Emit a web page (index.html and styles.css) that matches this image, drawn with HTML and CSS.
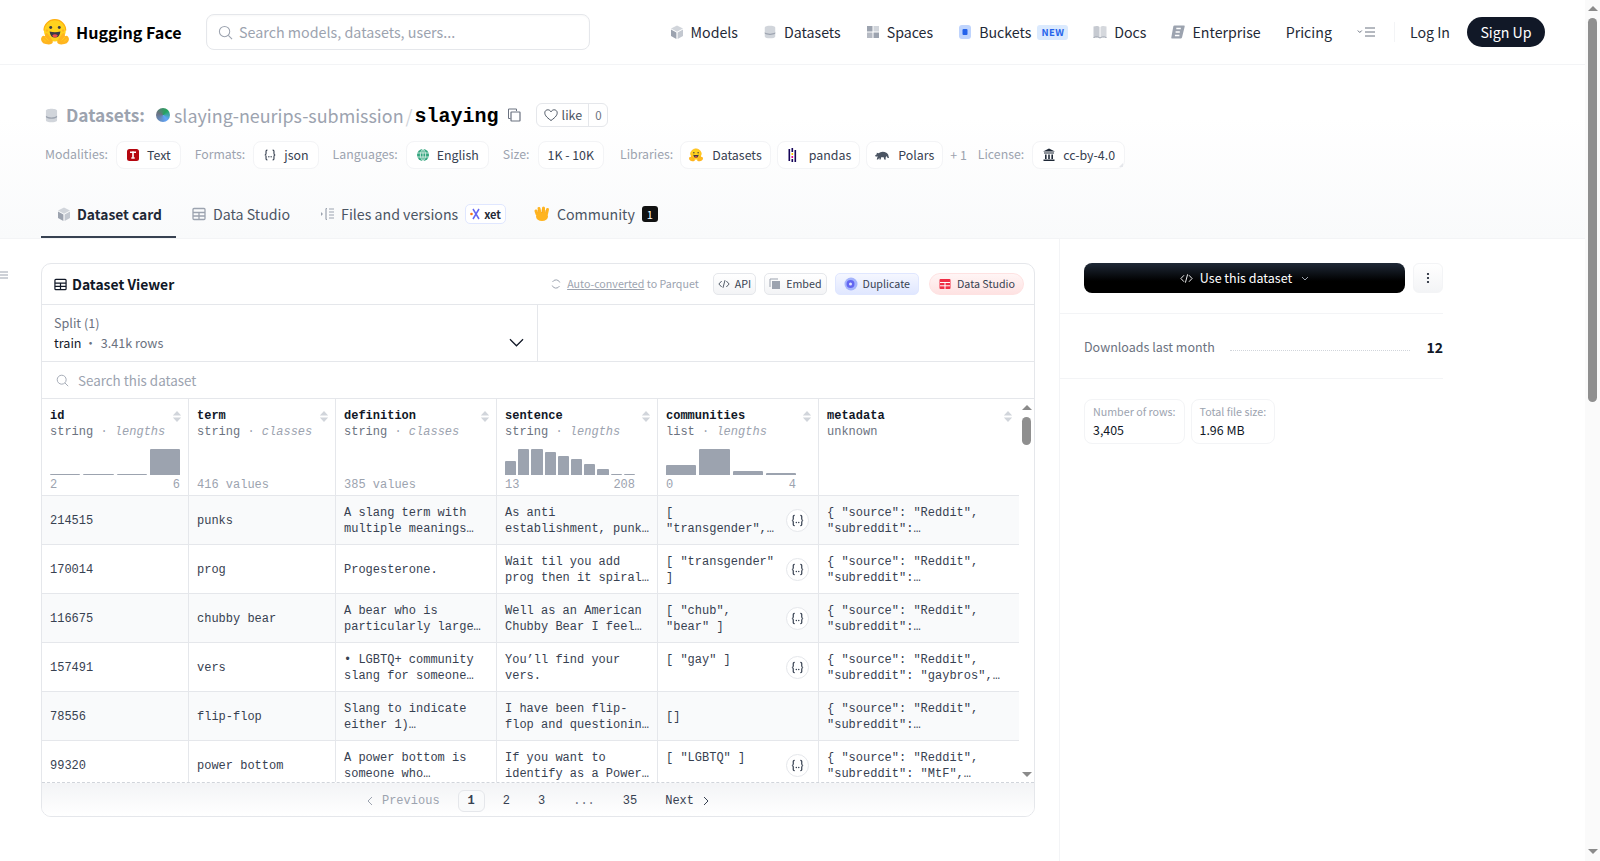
FILE: index.html
```html
<!DOCTYPE html>
<html lang="en">
<head>
<meta charset="utf-8">
<title>slaying-neurips-submission/slaying</title>
<link rel="stylesheet" href="styles.css">
</head>
<body>
<svg class="defs" width="0" height="0" aria-hidden="true">
  <symbol id="cube" viewBox="0 0 14 14"><path d="M7 .5 13 3.600 7 6.800 1 3.600z" fill="#d1d5db"/><path d="M1 4.600 6.400 7.600V14L1 11z" fill="#9ca3af"/><path d="M13 4.600 7.600 7.600V14L13 11z" fill="#c3c8d0"/></symbol>
  <symbol id="db" viewBox="0 0 14 16"><path d="M1 3c0-3 12-3 12 0v10c0 3-12 3-12 0z" fill="#d1d5db"/><path d="M1 8.400c3 2.200 9 2.200 12 0v1.400c-3 2.200-9 2.200-12 0z" fill="#9ca3af"/></symbol>
  <symbol id="hug" viewBox="0 0 95 88"><circle cx="47" cy="39" r="37" fill="#ffd21e"/><path d="M10 39a37 37 0 0 1 74 0" fill="none" stroke="#ffae0f" stroke-width="4"/><circle cx="33" cy="29" r="5" fill="#3a3b45"/><circle cx="62" cy="29" r="5" fill="#3a3b45"/><circle cx="20" cy="39" r="4" fill="#ffb41f"/><circle cx="75" cy="39" r="4" fill="#ffb41f"/><path d="M29 42q18 5 37 0q-3 21-18.500 21T29 42z" fill="#3a3b45"/><path d="M38 55q9-6 19 0q-3 8-9.500 8T38 55z" fill="#ef4e4e"/><path d="M3 60q-5 7-1 15t14 10q13 3 20-1t2-13L23 50q-4-5-8-1l-1 9q-7-4-11 2z" fill="#ffb41f"/><path d="M92 60q5 7 1 15t-14 10q-13 3-20-1t-2-13l15-21q4-5 8-1l1 9q7-4 11 2z" fill="#ffb41f"/><path d="M8 68l10 9M14 61l11 12" stroke="#ffd21e" stroke-width="3" fill="none"/><path d="M87 68l-10 9M81 61 70 73" stroke="#ffd21e" stroke-width="3" fill="none"/></symbol>
  <symbol id="braces" viewBox="0 0 16 16"><path d="M5 2.500C3 2.500 3.500 4 3.500 6S2.500 8 2 8c.5 0 1.500 0 1.500 2s-.5 3.500 1.500 3.500M11 2.500c2 0 1.500 1.500 1.500 3.500s1 2 1.500 2c-.5 0-1.500 0-1.500 2s.5 3.500-1.500 3.500" fill="none" stroke="#374151" stroke-width="1.300"/><circle cx="6.700" cy="10" r=".8" fill="#374151"/><circle cx="9.300" cy="10" r=".8" fill="#374151"/></symbol>
  <symbol id="grid" viewBox="0 0 14 14"><rect x="1" y="1.500" width="12" height="11" rx="1" fill="none" stroke="currentColor" stroke-width="1.300"/><path d="M1 5.500h12M7 5.500v7M1 9h12" stroke="currentColor" stroke-width="1.300"/></symbol>
  <symbol id="code" viewBox="0 0 14 14"><path d="M4.300 3.500 1 7l3.300 3.500M9.700 3.500 13 7l-3.300 3.500M8.200 2.500 5.800 11.500" fill="none" stroke="currentColor" stroke-width="1"/></symbol>
  <symbol id="sort" viewBox="0 0 10 14"><path d="M5 1 9.500 6H.5zM5 13 .5 8h9z" fill="#d1d5db"/></symbol>
  <symbol id="mag" viewBox="0 0 16 16"><circle cx="7" cy="7" r="5.500" fill="none" stroke="currentColor" stroke-width="1.100"/><path d="m11 11 4 4" stroke="currentColor" stroke-width="1.100"/></symbol>
</svg>

<div class="page-scrollbar"><span class="arrow-up"></span><span class="page-thumb"></span><span class="arrow-down"></span></div>

<header class="topbar">
  <a class="brand"><svg class="brand-logo"><use href="#hug"/></svg><span>Hugging Face</span></a>
  <div class="site-search"><svg class="site-search-icon"><use href="#mag"/></svg><span>Search models, datasets, users...</span></div>
  <nav class="nav">
    <a class="nav-item"><svg class="nav-ic"><use href="#cube"/></svg>Models</a>
    <a class="nav-item"><svg class="nav-ic"><use href="#db"/></svg>Datasets</a>
    <a class="nav-item"><svg class="nav-ic" viewBox="0 0 14 14"><rect x="1" y="1" width="5.500" height="5.500" fill="#9ca3af"/><rect x="7.500" y="1" width="5.500" height="5.500" fill="#d1d5db"/><rect x="1" y="7.500" width="5.500" height="5.500" fill="#b5bac3"/><rect x="7.500" y="7.500" width="5.500" height="5.500" fill="#9ca3af"/></svg>Spaces</a>
    <a class="nav-item"><svg class="nav-ic" viewBox="0 0 14 14"><rect x="1" y="0" width="12" height="14" rx="3" fill="#bfd4fd"/><rect x="4.500" y="4" width="5" height="6" rx="1" fill="#2563eb"/></svg>Buckets<span class="new-badge">NEW</span></a>
    <a class="nav-item"><svg class="nav-ic" viewBox="0 0 14 14"><path d="M.5 1.500c3-1 5-.5 6 .5v11c-1-1-3-1.500-6-.5z" fill="#c6cad1"/><path d="M13.500 1.500c-3-1-5-.5-6 .5v11c1-1 3-1.500 6-.5z" fill="#d5d8dd"/><path d="M.5 12.500c3-1 5-.5 6.500.5 1.500-1 3.500-1.500 6.500-.5" fill="none" stroke="#9ca3af"/></svg>Docs</a>
    <a class="nav-item"><svg class="nav-ic" viewBox="0 0 14 14"><path d="M3.500 0.500h9.500q1 0 .7 1L11 12.500q-.3 1-1.300 1H1q-1 0-.7-1L2.300 1.500q.2-1 1.200-1z" fill="#9ca3af"/><path d="M5.300 3.500h4.500M4.600 7h4.200M3.900 10.500h4.500" stroke="#fff" stroke-width="1.300"/></svg>Enterprise</a>
    <a class="nav-item">Pricing</a>
    <a class="nav-menu"><svg class="nav-menu-ic" viewBox="0 0 18 10"><path d="m.8 3.500 2 2 2-2" fill="none" stroke="#6b7280" stroke-width="1"/><path d="M8 1h10M8 5h10M8 9h10" stroke="#6b7280" stroke-width="1"/></svg></a>
    <span class="nav-sep"></span>
    <a class="nav-item nav-login">Log In</a>
    <a class="signup">Sign Up</a>
  </nav>
</header>

<section class="repo-head">
  <h1 class="repo-title">
    <svg class="repo-db"><use href="#db"/></svg>
    <span class="repo-kind">Datasets:</span>
    <span class="avatar"></span>
    <span class="repo-org">slaying-neurips-submission</span>
    <span class="repo-slash">/</span>
    <span class="repo-name">slaying</span>
    <svg class="repo-copy" viewBox="0 0 14 14"><path d="M3.500 10.500h-2V1h8v2" fill="none" stroke="#6b7280" stroke-width="1"/><rect x="4" y="4" width="9" height="9" rx=".5" fill="none" stroke="#6b7280" stroke-width="1.200"/></svg>
    <span class="like"><span class="like-main"><svg class="like-heart" viewBox="0 0 14 14"><path d="M7 12.500C2 9 .8 6.800.8 4.800.8 3 2.200 1.800 3.800 1.800c1.300 0 2.500.7 3.200 2 .7-1.300 1.900-2 3.200-2 1.600 0 3 1.200 3 3 0 2-1.200 4.200-6.200 7.700z" fill="none" stroke="#4b5563" stroke-width="1"/></svg>like</span><span class="like-count">0</span></span>
  </h1>
  <div class="tags">
    <span class="tag-label">Modalities:</span>
    <span class="tag"><svg class="tag-ic" viewBox="0 0 14 14"><rect x="1" y="1" width="12" height="12" rx="2.500" fill="#b5060f"/><rect x="4" y="3.500" width="6" height="1.500" fill="#fff"/><rect x="6.200" y="3.500" width="1.600" height="7" fill="#fff"/><rect x="5" y="9.500" width="4" height="1" fill="#fff"/></svg>Text</span>
    <span class="tag-label">Formats:</span>
    <span class="tag"><svg class="tag-ic"><use href="#braces"/></svg>json</span>
    <span class="tag-label">Languages:</span>
    <span class="tag"><svg class="tag-ic" viewBox="0 0 14 14"><circle cx="7" cy="7" r="6" fill="#34a57f"/><path d="M1 5h12M1 9h12M7 1v12M7 1C3.500 4 3.500 10 7 13M7 1c3.500 3 3.500 9 0 12" fill="none" stroke="#e7f6f0" stroke-width=".8"/></svg>English</span>
    <span class="tag-label">Size:</span>
    <span class="tag tag-size">1K - 10K</span>
    <span class="tag-label tag-label-libs">Libraries:</span>
    <span class="tag tag-lib"><svg class="tag-ic"><use href="#hug"/></svg>Datasets</span>
    <span class="tag tag-lib"><svg class="tag-ic" viewBox="0 0 14 14"><rect x="2.500" y="1" width="1.600" height="12" fill="#150458"/><rect x="5.500" y="0" width="1.600" height="4" fill="#150458"/><rect x="5.500" y="5" width="1.600" height="2" fill="#ffca00"/><rect x="5.500" y="8" width="1.600" height="2" fill="#e70488"/><rect x="5.500" y="11" width="1.600" height="3" fill="#150458"/><rect x="8.500" y="2" width="1.600" height="12" fill="#150458"/></svg>pandas</span>
    <span class="tag tag-lib"><svg class="tag-ic" viewBox="0 0 16 12"><path d="M0 6.500 2 5V3.500L4 4q3-2.500 7-1.500 3 .5 4 3l1 4h-1.500L13 7l-1 2.500 .5 1.500H10.500L10 8.500H7L6.500 11H5V9L3.500 11H2L3 7.500 1 8z" fill="#4b5563"/></svg>Polars</span>
    <span class="tag-more">+ 1</span>
    <span class="tag-label">License:</span>
    <span class="tag tag-license"><svg class="tag-ic" viewBox="0 0 14 14"><path d="M7 .5 13 3.500H1zM2 4.500h10v1H2zM3 6.500h1.600v4.500H3zM6.200 6.500h1.600v4.500H6.200zM9.400 6.500H11v4.500H9.400zM1.500 11.500h11v1.500h-11z" fill="#1f2937"/></svg>cc-by-4.0<span class="tag-corner"></span></span>
  </div>
  <div class="tabs">
    <a class="tab tab-active"><svg class="tab-ic"><use href="#cube"/></svg>Dataset card</a>
    <a class="tab"><svg class="tab-ic tab-grid"><use href="#grid"/></svg>Data Studio</a>
    <a class="tab"><svg class="tab-ic" viewBox="0 0 14 14"><path d="M1 5l2 2-2 2z" fill="#9ca3af"/><path d="M6 1.500h1M6 1.500v11M6 12.500h1M9 2h5M9 5h5M9 8h5M9 11h5" stroke="#9ca3af" stroke-width="1.200"/></svg>Files and versions<span class="xet"><svg class="xet-ic" viewBox="0 0 12 12"><path d="M3 1l6 10M9 1 3 11" stroke="#6366f1" stroke-width="1.500"/><circle cx="1.500" cy="6" r="1.300" fill="#f97316"/></svg>xet</span></a>
    <a class="tab tab-comm"><svg class="tab-hand" viewBox="0 0 16 16"><g fill="none" stroke="#ffb41f" stroke-width="3" stroke-linecap="round"><path d="M3 8 2 5M6 7 5 2.500M9.500 7V2M12.500 8l1-4.500"/></g><ellipse cx="8" cy="10.500" rx="6" ry="4.500" fill="#ffb41f"/><path d="M4.500 7 4 4M8 7V3.500M11.500 7l.5-3" fill="none" stroke="#f59e0b" stroke-width=".6"/></svg>Community<span class="count-badge">1</span></a>
  </div>
</section>

<main class="layout">
  <div class="content">
    <svg class="side-toggle" viewBox="0 0 8 8"><path d="M0 1h8M0 4h8M0 7h8" stroke="#9ca3af" stroke-width="1"/></svg>
    <section class="viewer">
      <div class="viewer-head">
        <svg class="viewer-ic"><use href="#grid"/></svg>
        <h2 class="viewer-title">Dataset Viewer</h2>
        <div class="viewer-actions">
          <svg class="refresh" viewBox="0 0 10 10"><path d="M8.800 3.500A4 4 0 0 0 1.500 3M1.200 6.500A4 4 0 0 0 8.500 7" fill="none" stroke="#9ca3af" stroke-width="1"/></svg>
          <span class="converted"><u>Auto-converted</u> to Parquet</span>
          <a class="act"><svg class="act-ic"><use href="#code"/></svg>API</a>
          <a class="act"><svg class="act-ic" viewBox="0 0 12 12"><path d="M1 9V1h8" fill="none" stroke="#9ca3af"/><rect x="3" y="3" width="8" height="8" fill="#9ca3af"/></svg>Embed</a>
          <a class="act act-blue"><svg class="act-ic act-dup" viewBox="0 0 14 14"><circle cx="7" cy="7" r="6.500" fill="#a5b4fc"/><circle cx="6.500" cy="7" r="4" fill="#6366f1"/><circle cx="6.500" cy="7" r="1.500" fill="#e0e7ff"/></svg>Duplicate</a>
          <a class="act act-red"><svg class="act-ic" viewBox="0 0 12 12"><rect x=".5" y="1" width="11" height="10" rx="1" fill="#ef2d45"/><path d="M1 4.500h10M1 7.800h10M6 4.500V11" stroke="#fff" stroke-width="1"/></svg>Data Studio</a>
        </div>
      </div>
      <div class="split-row">
        <div class="split">
          <div class="split-text">
            <div class="split-label">Split (1)</div>
            <div class="split-val">train <span class="split-dot">·</span> <span class="split-rows">3.41k rows</span></div>
          </div>
          <svg class="split-chev" viewBox="0 0 16 9"><path d="m1 1 7 7 7-7" fill="none" stroke="#111827" stroke-width="1.300"/></svg>
        </div>
        <div class="split-empty"></div>
      </div>
      <div class="data-search"><svg class="data-search-ic"><use href="#mag"/></svg><span>Search this dataset</span></div>

      <div class="table-wrap">
        <div class="scroller">
          <table class="grid">
            <colgroup><col class="c-s"><col class="c-s"><col class="c-m"><col class="c-m"><col class="c-m"><col></colgroup>
            <thead>
              <tr>
                <th><div class="th-name">id<svg class="sort"><use href="#sort"/></svg></div><div class="th-type">string <span>· <i>lengths</i></span></div>
                  <div class="chart"><b class="bar" style="height:1px"></b><b class="bar" style="height:1px"></b><b class="bar" style="height:1px"></b><b class="bar" style="height:26px"></b></div>
                  <div class="range"><span>2</span><span>6</span></div></th>
                <th><div class="th-name">term<svg class="sort"><use href="#sort"/></svg></div><div class="th-type">string <span>· <i>classes</i></span></div>
                  <div class="chart"></div><div class="range"><span>416 values</span></div></th>
                <th><div class="th-name">definition<svg class="sort"><use href="#sort"/></svg></div><div class="th-type">string <span>· <i>classes</i></span></div>
                  <div class="chart"></div><div class="range"><span>385 values</span></div></th>
                <th><div class="th-name">sentence<svg class="sort"><use href="#sort"/></svg></div><div class="th-type">string <span>· <i>lengths</i></span></div>
                  <div class="chart chart-tight"><b class="bar" style="height:14px"></b><b class="bar" style="height:26px"></b><b class="bar" style="height:26px"></b><b class="bar" style="height:23px"></b><b class="bar" style="height:19px"></b><b class="bar" style="height:16px"></b><b class="bar" style="height:11px"></b><b class="bar" style="height:6px"></b><b class="bar" style="height:1px"></b><b class="bar" style="height:1px"></b></div>
                  <div class="range"><span>13</span><span>208</span></div></th>
                <th><div class="th-name">communities<svg class="sort"><use href="#sort"/></svg></div><div class="th-type">list <span>· <i>lengths</i></span></div>
                  <div class="chart"><b class="bar" style="height:10px"></b><b class="bar" style="height:26px"></b><b class="bar" style="height:4px"></b><b class="bar" style="height:2px"></b></div>
                  <div class="range"><span>0</span><span>4</span></div></th>
                <th><div class="th-name">metadata<svg class="sort"><use href="#sort"/></svg></div><div class="th-type">unknown</div>
                  <div class="chart"></div><div class="range"></div></th>
              </tr>
            </thead>
            <tbody>
              <tr><td>214515</td><td>punks</td><td>A slang term with multiple meanings…</td><td>As anti establishment, punk…</td>
                <td><div class="list"><span class="list-text">[ "transgender",…</span><span class="json-btn"><svg><use href="#braces"/></svg></span></div></td>
                <td>{ "source": "Reddit", "subreddit":…</td></tr>
              <tr><td>170014</td><td>prog</td><td>Progesterone.</td><td>Wait til you add prog then it spiral…</td>
                <td><div class="list"><span class="list-text">[ "transgender" ]</span><span class="json-btn"><svg><use href="#braces"/></svg></span></div></td>
                <td>{ "source": "Reddit", "subreddit":…</td></tr>
              <tr><td>116675</td><td>chubby bear</td><td>A bear who is particularly large…</td><td>Well as an American Chubby Bear I feel…</td>
                <td><div class="list"><span class="list-text">[ "chub", "bear" ]</span><span class="json-btn"><svg><use href="#braces"/></svg></span></div></td>
                <td>{ "source": "Reddit", "subreddit":…</td></tr>
              <tr><td>157491</td><td>vers</td><td>• LGBTQ+ community slang for someone…</td><td>You’ll find your vers.</td>
                <td><div class="list"><span class="list-text">[ "gay" ]</span><span class="json-btn"><svg><use href="#braces"/></svg></span></div></td>
                <td>{ "source": "Reddit", "subreddit": "gaybros",…</td></tr>
              <tr><td>78556</td><td>flip-flop</td><td>Slang to indicate either 1)…</td><td>I have been flip-flop and questionin…</td>
                <td>[]</td>
                <td>{ "source": "Reddit", "subreddit":…</td></tr>
              <tr><td>99320</td><td>power bottom</td><td>A power bottom is someone who…</td><td>If you want to identify as a Power…</td>
                <td><div class="list"><span class="list-text">[ "LGBTQ" ]</span><span class="json-btn"><svg><use href="#braces"/></svg></span></div></td>
                <td>{ "source": "Reddit", "subreddit": "MtF",…</td></tr>
            </tbody>
          </table>
        </div>
        <div class="table-scrollbar"><span class="arrow-up"></span><span class="table-thumb"></span><span class="arrow-down"></span></div>
      </div>

      <nav class="pager">
        <a class="pg pg-off pg-prev"><svg class="pg-chev" viewBox="0 0 6 10"><path d="M5 1 1 5l4 4" fill="none" stroke="currentColor"/></svg>Previous</a>
        <a class="pg pg-on">1</a>
        <a class="pg">2</a>
        <a class="pg">3</a>
        <a class="pg pg-dots">...</a>
        <a class="pg">35</a>
        <a class="pg pg-next">Next<svg class="pg-chev" viewBox="0 0 6 10"><path d="m1 1 4 4-4 4" fill="none" stroke="currentColor"/></svg></a>
      </nav>
    </section>
  </div>

  <aside class="side">
    <div class="side-actions">
      <a class="use-btn"><svg class="use-ic"><use href="#code"/></svg>Use this dataset<svg class="use-chev" viewBox="0 0 8 5"><path d="m1 1 3 3 3-3" fill="none" stroke="#9ca3af"/></svg></a>
      <a class="more-btn"><svg class="more-ic" viewBox="0 0 4 12"><circle cx="2" cy="2" r="1.100" fill="#111827"/><circle cx="2" cy="6" r="1.100" fill="#111827"/><circle cx="2" cy="10" r="1.100" fill="#111827"/></svg></a>
    </div>
    <div class="downloads"><span class="dl-label">Downloads last month</span><span class="dl-line"></span><span class="dl-num">12</span></div>
    <div class="stats">
      <div class="stat"><div class="stat-k">Number of rows:</div><div class="stat-v">3,405</div></div>
      <div class="stat"><div class="stat-k">Total file size:</div><div class="stat-v">1.96 MB</div></div>
    </div>
  </aside>
</main>
</body>
</html>
```
FILE: styles.css
```css
* { box-sizing: border-box; }
body {
  margin: 0 15px 0 0;
  background: #fff;
  color: #111827;
  font-family: "Noto Sans CJK SC", "Noto Sans", sans-serif;
  font-size: 14.2px;
  line-height: 24px;
}
a { color: inherit; text-decoration: none; }
svg { display: block; flex: none; }
.defs { position: absolute; }

/* page scrollbar, over the right edge of the window */
.page-scrollbar {
  position: fixed; top: 0; right: 0; bottom: 0; width: 15px;
  display: flex; flex-direction: column; align-items: center;
  background: #fafafa; padding: 6px 0 7px;
}
.page-thumb { width: 9px; height: 384px; margin-top: 7px; background: #8f8f8f; border-radius: 5px; }
.arrow-up { width: 0; height: 0; border: 5px solid transparent; border-top: 0; border-bottom: 5px solid #8a8a8a; flex: none; }
.arrow-down { width: 0; height: 0; border: 5px solid transparent; border-bottom: 0; border-top: 5px solid #8a8a8a; margin-top: auto; flex: none; }

/* top bar */
.topbar {
  display: flex;
  align-items: center;
  height: 65px;
  padding: 0 40px 0 41px;
  border-bottom: 1px solid #f3f4f6;
}
.brand { display: flex; align-items: center; gap: 7px; font-weight: 700; font-size: 16.1px; color: #000; width: 165px; }
.brand-logo { width: 28px; height: 26px; }
.site-search {
  display: flex; align-items: center; gap: 6px;
  width: 384px; height: 36px; padding: 0 11px;
  border: 1px solid #e5e7eb; border-radius: 8px;
  color: #9ca3af; font-size: 14.3px;
  box-shadow: inset 0 1px 2px rgba(0,0,0,.03);
}
.site-search-icon { width: 15px; height: 15px; color: #9ca3af; }
.nav { display: flex; align-items: center; margin-left: auto; color: #1f2937; }
.nav-item { display: flex; align-items: center; gap: 7px; margin-right: 25px; }
.nav-ic { width: 14px; height: 14px; }
.new-badge {
  margin-left: -1px; padding: 0 4px; height: 15px; line-height: 15px;
  background: #dbeafe; color: #2563eb; border-radius: 3px;
  font-size: 9.5px; font-weight: 700; letter-spacing: .4px;
}
.nav-menu { margin-right: 19px; }
.nav-menu-ic { width: 18px; height: 10px; }
.nav-sep { width: 1px; height: 20px; background: #f3f4f6; margin-right: 15px; }
.nav-login { margin-right: 17px; }
.signup {
  display: block; width: 78px; height: 30px; line-height: 30px; text-align: center;
  background: #111827; color: #fff; border-radius: 15px;
}

/* repo header */
.repo-head {
  height: 174px;
  padding: 37px 0 0 41px;
  background: linear-gradient(to top, #f9fafb, #fff 70%);
  border-bottom: 1px solid #f3f4f6;
  display: flex; flex-direction: column;
}
.repo-title { display: flex; align-items: center; margin: 0 0 0 4px; height: 26px; font-weight: 400; font-size: 17.9px; }
.repo-db { width: 13px; height: 15px; margin-right: 8px; }
.repo-kind { font-weight: 700; font-size: 17.3px; color: #9ca3af; margin-right: 11px; }
.avatar { width: 14px; height: 14px; border-radius: 50%; background: conic-gradient(from 140deg, #60a5fa, #6b7280 150deg, #22a55b 260deg, #60a5fa); margin-right: 4px; }
.repo-org { color: #9ca3af; }
.repo-slash { color: #d1d5db; margin: 0 2px; }
.repo-name { font-family: "Liberation Mono", monospace; font-weight: 700; font-size: 20px; color: #000; padding-top: 3px; }
.repo-copy { width: 14px; height: 14px; margin-left: 8px; }
.like { display: flex; height: 24px; margin-left: 15px; border: 1px solid #e5e7eb; border-radius: 6px; font-size: 12.5px; color: #4b5563; line-height: 22px; background: #fff; }
.like-main { display: flex; align-items: center; gap: 4px; padding: 0 6px 0 7px; }
.like-heart { width: 14px; height: 14px; }
.like-count { padding: 0 5px 0 6px; border-left: 1px solid #e5e7eb; color: #6b7280; font-size: 11.5px; }

.tags { display: flex; align-items: center; margin: 13px 0 0 4px; height: 28px; font-size: 12.4px; }
.tag-label { color: #9ca3af; font-size: 12.3px; margin-right: 8px; margin-top: -2px; }
.tag-label-libs { margin-right: 7px; }
.tag {
  display: flex; align-items: center; gap: 7px;
  height: 28px; padding: 0 9px;
  background: #fff; border: 1px solid #f3f4f6; border-radius: 8px;
  color: #374151; margin-right: 14px; white-space: nowrap;
}
.tag-size { margin-right: 16px; }
.tag-lib { margin-right: 6px; gap: 9px; padding: 0 8px; }
.tag-ic { width: 14px; height: 14px; }
.tag-more { color: #9ca3af; margin: 0 11px 0 1px; }
.tag-license { position: relative; margin-right: 0; }
.tag-corner { position: absolute; right: 1px; bottom: 1px; width: 0; height: 0; border-left: 4px solid transparent; border-bottom: 4px solid #e5e7eb; }

.tabs { display: flex; margin-top: auto; height: 48px; }
.tab {
  display: flex; align-items: center; gap: 7px;
  height: 48px; padding: 0 14px 0 16px;
  color: #4b5563; white-space: nowrap;
}
.tab-active { color: #1f2937; font-weight: 700; font-size: 13.8px; gap: 6px; box-shadow: inset 0 -2px 0 #374151; }
.tab-comm { padding-left: 14px; }
.tab-ic { width: 14px; height: 14px; }
.tab-grid { color: #9ca3af; }
.tab-hand { width: 16px; height: 16px; }
.xet {
  display: flex; align-items: center; gap: 2px;
  height: 20px; padding: 0 4px;
  background: #fff; border: 1px solid #e0e7ff; border-radius: 5px;
  font-size: 11px; font-weight: 700; color: #1f2937;
}
.xet-ic { width: 12px; height: 12px; }
.count-badge {
  width: 16px; height: 16px; line-height: 16px; text-align: center;
  background: #111; color: #fff; border-radius: 3px; font-size: 11px;
}

/* main layout */
.layout { display: grid; grid-template-columns: 1059px 1fr; height: 622px; }
.content { position: relative; padding: 24px 24px 0 41px; }
.side-toggle { position: absolute; left: 0; top: 32px; width: 8px; height: 8px; }
.viewer { border: 1px solid #e5e7eb; border-radius: 10px; height: 554px; display: flex; flex-direction: column; overflow: hidden; }
.viewer-head { display: flex; align-items: center; height: 41px; padding: 0 10px 0 12px; border-bottom: 1px solid #e5e7eb; flex: none; }
.viewer-ic { width: 13px; height: 13px; color: #111827; }
.viewer-title { margin: 0 0 0 5px; font-size: 13.9px; font-weight: 700; color: #111827; }
.viewer-actions { display: flex; align-items: center; margin-left: auto; font-size: 10.7px; color: #374151; }
.refresh { width: 10px; height: 10px; margin-right: 6px; }
.converted { color: #9ca3af; margin-right: 14px; }
.act {
  display: flex; align-items: center; gap: 5px;
  height: 22px; padding: 0 4px;
  margin-right: 8px;
  border: 1px solid #e5e7eb; border-radius: 5px;
  background: linear-gradient(to bottom, #fff, #f3f4f6);
}
.act-ic { width: 12px; height: 12px; color: #374151; }
.act-dup { width: 14px; height: 14px; }
.act-blue { padding: 0 8px; margin-right: 10px; border-color: #e0e7ff; background: linear-gradient(to bottom, #f5f7ff, #e0e7ff); }
.act-red { gap: 6px; padding: 0 8px 0 9px; margin-right: 0; border-radius: 12px; border-color: #fee2e2; background: linear-gradient(to bottom, #fff5f5, #fee2e2); }

.split-row { display: flex; height: 57px; border-bottom: 1px solid #e5e7eb; flex: none; }
.split { display: flex; align-items: center; width: 496px; padding: 0 13px 0 12px; border-right: 1px solid #e5e7eb; }
.split-text { flex: 1; font-size: 12.6px; line-height: 20px; }
.split-label { color: #6b7280; }
.split-val { color: #111827; }
.split-dot { color: #6b7280; margin: 0 1px 0 0; }
.split-rows { color: #6b7280; }
.split-chev { width: 15px; height: 9px; margin-top: 19px; }
.split-empty { flex: 1; }
.data-search { display: flex; align-items: center; gap: 9px; height: 37px; padding: 0 0 0 14px; flex: none; color: #9ca3af; font-size: 13.4px; border-bottom: 1px solid #e5e7eb; }
.data-search-ic { width: 13px; height: 13px; }

/* table */
.table-wrap { flex: 1; min-height: 0; display: flex; }
.scroller { flex: 1; min-width: 0; overflow: hidden; font-family: "Liberation Mono", monospace; font-size: 12px; line-height: 16px; }
.table-scrollbar { width: 15px; flex: none; display: flex; flex-direction: column; align-items: center; padding: 6px 0 5px; }
.table-thumb { width: 9px; height: 28px; margin-top: 7px; background: #8f8f8f; border-radius: 5px; }
.grid { width: 100%; table-layout: fixed; border-collapse: separate; border-spacing: 0; }
.c-s { width: 147px; }
.c-m { width: 161px; }
.grid th {
  height: 97px; padding: 9px 8px 1px; vertical-align: top; text-align: left; font-weight: 400;
  background: #fff; border-right: 1px solid #e5e7eb; border-bottom: 1px solid #e5e7eb;
  color: #6b7280;
}
.grid th:last-child, .grid td:last-child { border-right: 0; }
.th-name { display: flex; justify-content: space-between; align-items: center; font-weight: 700; color: #111827; height: 16px; margin-right: -2px; }
.sort { width: 10px; height: 13px; }
.th-type { height: 16px; color: #6b7280; white-space: nowrap; }
.th-type span { color: #9ca3af; }
.chart { display: flex; align-items: flex-end; gap: 3px; width: 130px; height: 26px; margin-top: 9px; }
.chart-tight { gap: 2px; }
.bar { flex: 1; background: #9ca3af; display: block; border-radius: 1px 1px 0 0; }
.range { display: flex; justify-content: space-between; width: 130px; height: 16px; margin-top: 2px; color: #9ca3af; white-space: nowrap; }
.grid td {
  height: 49px; padding: 1px 7px 0 8px; vertical-align: middle;
  border-right: 1px solid #e5e7eb; border-bottom: 1px solid #e5e7eb;
  color: #374151; overflow-wrap: anywhere;
}
.grid tbody tr:nth-child(odd) td { background: #f9fafb; }
.list { display: flex; align-items: flex-start; height: 32px; }
.list-text { flex: 1; min-width: 0; padding-right: 8px; }
.json-btn {
  display: flex; align-items: center; justify-content: center; flex: none;
  width: 23px; height: 23px; margin: 4px 2px 0 0; border: 1px solid #e5e7eb; border-radius: 50%; background: #fff;
}
.json-btn svg { width: 15px; height: 15px; }

.pager {
  display: flex; justify-content: center; align-items: center; gap: 8px; flex: none;
  height: 34px; padding-top: 2px; border-top: 1px dashed #d1d5db;
  background: linear-gradient(to bottom, #f3f4f6, #fff);
  font-family: "Liberation Mono", monospace; font-size: 12px; color: #374151;
}
.pg { display: flex; align-items: center; height: 22px; padding: 0 9px; border: 1px solid transparent; border-radius: 6px; }
.pg-prev, .pg-next { gap: 9px; }
.pg-off { color: #9ca3af; }
.pg-on { font-weight: 700; border-color: #e5e7eb; background: #f9fafb; }
.pg-dots { color: #6b7280; }
.pg-chev { width: 6px; height: 10px; }

/* sidebar */
.side { border-left: 1px solid #f3f4f6; width: 384px; }
.side-actions { display: flex; gap: 8px; padding: 24px 0 20px 24px; border-bottom: 1px solid #f3f4f6; }
.use-btn {
  flex: 1; display: flex; align-items: center; justify-content: center; gap: 7px;
  height: 30px; border-radius: 8px; color: #fff; font-size: 12.5px;
  background: linear-gradient(to bottom, #1f2937, #000 60%);
}
.use-ic { width: 13px; height: 13px; color: #fff; }
.use-chev { width: 8px; height: 5px; margin-left: 2px; }
.more-btn {
  display: flex; align-items: center; justify-content: center;
  width: 30px; height: 30px; border: 1px solid #f3f4f6; border-radius: 6px; background: linear-gradient(to bottom, #fff, #f3f4f6);
}
.more-ic { width: 4px; height: 12px; }
.downloads { display: flex; align-items: center; height: 65px; padding: 1px 0 0 24px; border-bottom: 1px solid #f3f4f6; }
.dl-label { color: #6b7280; font-size: 12.5px; }
.dl-line { flex: 1; margin: 8px 16px 0 15px; border-top: 1px dotted #d1d5db; }
.dl-num { font-weight: 700; font-size: 14px; color: #111827; }
.stats { display: flex; gap: 6px; padding: 20px 0 0 24px; }
.stat { height: 45px; padding: 3px 8px; border: 1px solid #f3f4f6; border-radius: 8px; }
.stat-k { color: #9ca3af; font-size: 10.7px; line-height: 18px; white-space: nowrap; }
.stat-v { color: #111827; font-size: 12.4px; line-height: 19px; }
```
